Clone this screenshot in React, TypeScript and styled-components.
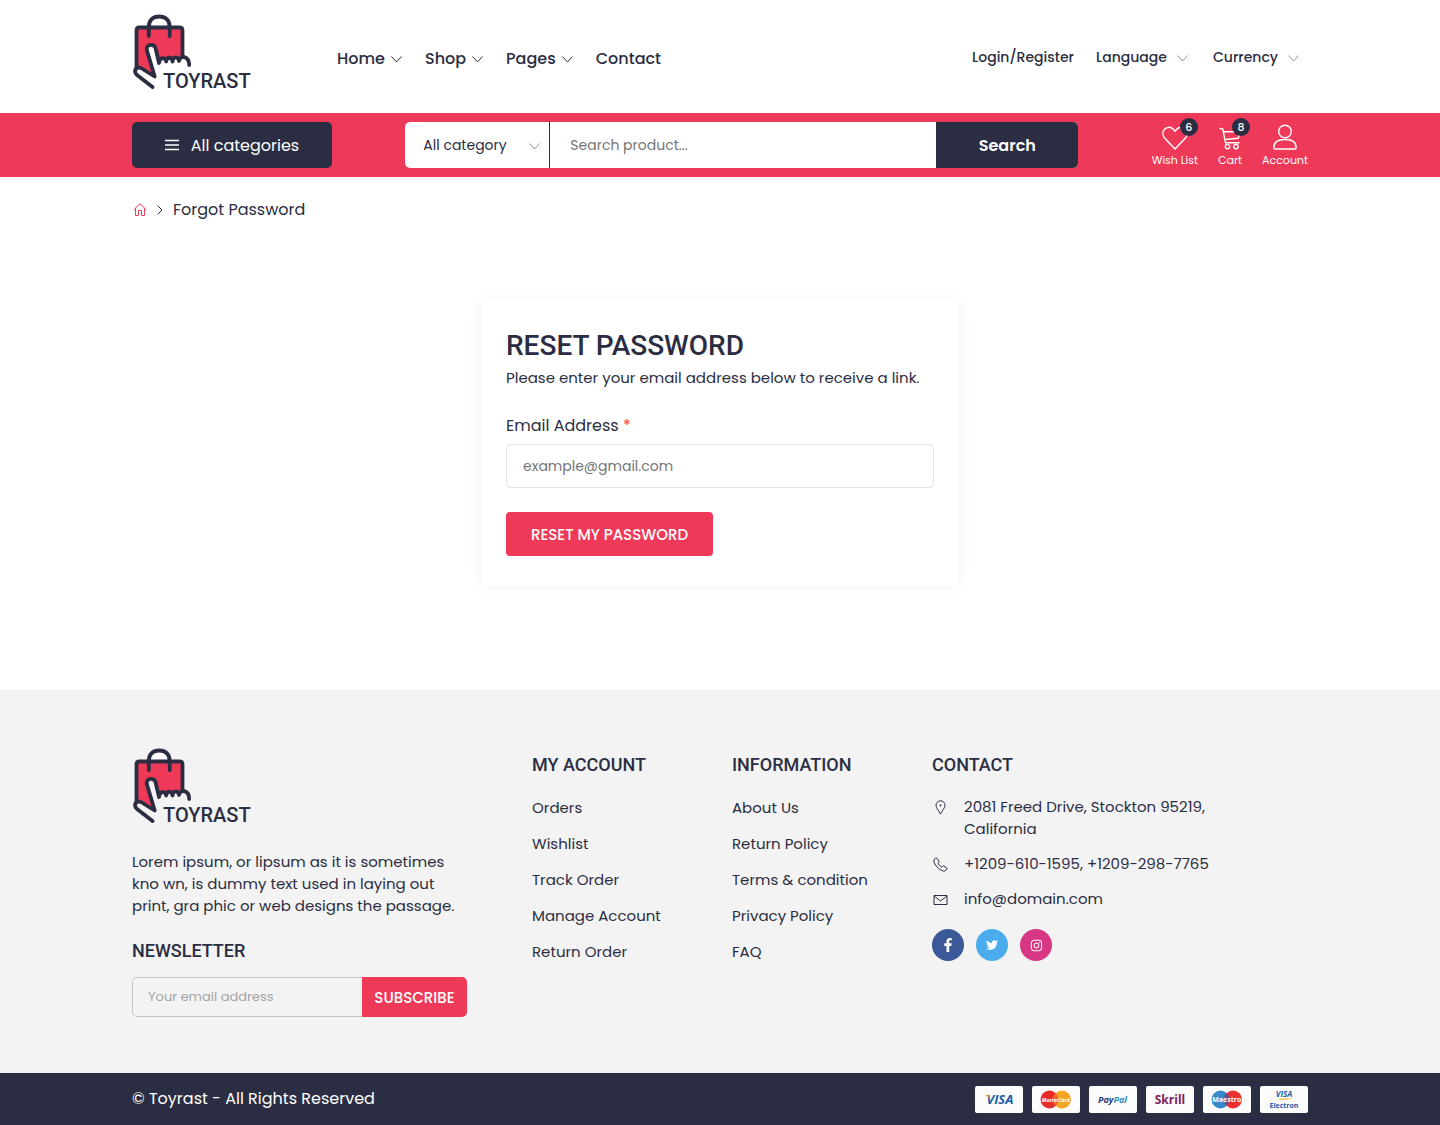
import React from "react";
import styled, { createGlobalStyle } from "styled-components";
import { FaFacebookF, FaTwitter, FaInstagram } from "react-icons/fa";

const pink = "#ee3a58";
const navy = "#2b2d42";
const body = `Poppins, Inter, "Noto Sans", sans-serif`;
const heading = `Roboto, "Liberation Sans", sans-serif`;

const GlobalStyle = createGlobalStyle`
  *, *::before, *::after { box-sizing: border-box; }
  body { margin: 0; background: #fff; color: ${navy}; font: 400 15px/22px ${body}; }
  h1, h2, p, ul { margin: 0; padding: 0; }
  ul { list-style: none; }
  a { color: inherit; text-decoration: none; }
  button, input, select { font-family: inherit; color: inherit; border: 0; margin: 0; }
  button { cursor: pointer; padding: 0; }
  svg { display: block; flex: none; }
`;

const Container = styled.div`
  width: 100%;
  max-width: 1200px;
  margin: 0 auto;
  padding: 0 12px;
`;

/* ---------- header ---------- */
const HeaderRow = styled(Container)`
  display: flex;
  align-items: center;
  padding-top: 14px;
  padding-bottom: 19px;
`;
const LogoLink = styled.a`
  display: block;
  width: 120px;
`;
const Nav = styled.nav`
  display: flex;
  gap: 23px;
  margin: 10px auto 0 85px;
  font-size: 16px;
  line-height: 24px;
  font-weight: 500;
`;
const NavLink = styled.a`
  display: flex;
  align-items: center;
  gap: 6px;
`;
const Tools = styled.div`
  display: flex;
  align-items: center;
  gap: 22px;
  margin-top: 6px;
  padding-right: 6px;
  font-size: 14px;
  font-weight: 500;
`;
const SelectWrap = styled.div`
  position: relative;
  display: flex;
  align-items: center;
  & > svg {
    position: absolute;
    right: 3px;
    margin-top: 2px;
    color: #8f909b;
    pointer-events: none;
  }
`;
const PlainSelect = styled.select`
  appearance: none;
  background: transparent;
  padding: 0 24px 0 0;
  font-size: 14px;
  line-height: 22px;
  font-weight: 500;
`;

/* ---------- search band ---------- */
const Band = styled.div`
  background: ${pink};
  padding: 9px 0;
`;
const BandRow = styled(Container)`
  display: flex;
  justify-content: space-between;
`;
const Categories = styled.button`
  display: flex;
  align-items: center;
  justify-content: center;
  gap: 12px;
  width: 200px;
  height: 46px;
  border-radius: 5px;
  background: ${navy};
  color: #fff;
  font-size: 16px;
  font-weight: 400;
`;
const SearchForm = styled.form`
  display: flex;
  flex: 0 1 673px;
  height: 46px;
  border-radius: 5px;
  overflow: hidden;
  background: #fff;
`;
const CategoryWrap = styled(SelectWrap)`
  flex: 0 0 145px;
  border-right: 1px solid ${navy};
  & > svg { right: 9px; }
`;
const CategorySelect = styled(PlainSelect)`
  width: 100%;
  height: 46px;
  padding: 0 24px 0 18px;
  font-weight: 400;
`;
const SearchInput = styled.input`
  flex: 1;
  min-width: 0;
  padding: 0 20px;
  font-size: 14px;
  background: #fff;
  outline: none;
  &::placeholder { color: #757575; opacity: 1; }
`;
const SearchButton = styled.button`
  flex: 0 0 142px;
  background: ${navy};
  color: #fff;
  font-size: 16px;
  font-weight: 600;
`;
const Shortcuts = styled.div`
  display: flex;
  align-items: flex-end;
  gap: 20px;
  color: #fff;
`;
const Shortcut = styled.a`
  display: flex;
  flex-direction: column;
  align-items: center;
  gap: 2px;
  font-size: 11px;
  line-height: 16px;
  font-weight: 400;
`;
const IconBox = styled.span`
  position: relative;
  display: block;
`;
const Badge = styled.span<{ $shift: number }>`
  position: absolute;
  top: -8px;
  right: -${(p) => p.$shift}px;
  width: 18px;
  height: 18px;
  border-radius: 50%;
  background: ${navy};
  text-align: center;
  font-size: 11px;
  line-height: 18px;
  font-weight: 500;
`;

/* ---------- main ---------- */
const Crumbs = styled(Container)`
  display: flex;
  align-items: center;
  padding-top: 21px;
  font-size: 16px;
  line-height: 24px;
  & > a { color: ${pink}; padding: 0 10px 0 1px; }
  & > span { padding-left: 10px; }
`;
const Card = styled.form`
  width: 100%;
  max-width: 476px;
  margin: 77px auto 104px;
  padding: 30px 24px;
  background: #fff;
  box-shadow: 0 0 15px rgba(0, 0, 0, 0.06);
`;
const Title = styled.h1`
  margin-bottom: 4px;
  font: 500 28px/34px ${heading};
`;
const Lead = styled.p`
  margin-bottom: 25px;
`;
const Label = styled.label`
  display: block;
  margin-bottom: 6px;
  font-size: 16px;
  line-height: 24px;
`;
const Required = styled.span`
  color: #f44336;
`;
const EmailInput = styled.input`
  display: block;
  width: 100%;
  height: 44px;
  margin-bottom: 24px;
  padding: 0 16px;
  border: 1px solid #e2e2e4;
  border-radius: 4px;
  font-size: 14px;
  outline: none;
  &::placeholder { color: #757575; opacity: 1; }
`;
const ResetButton = styled.button`
  display: block;
  width: 207px;
  height: 44px;
  border-radius: 4px;
  background: ${pink};
  color: #fff;
  font-size: 15px;
  font-weight: 500;
`;

/* ---------- footer ---------- */
const FooterArea = styled.footer`
  background: #f3f3f3;
`;
const FooterGrid = styled(Container)`
  display: grid;
  grid-template-columns: repeat(12, 1fr);
  column-gap: 24px;
  padding-top: 58px;
  padding-bottom: 56px;
`;
const Column = styled.section<{ $span: number; $flush?: boolean }>`
  grid-column: span ${(p) => p.$span};
  padding-top: ${(p) => (p.$flush ? 0 : 6)}px;
`;
const ColumnTitle = styled.h2`
  font: 500 18px/22px ${heading};
`;
const About = styled.p`
  max-width: 335px;
  margin: 23px 0;
`;
const Newsletter = styled.form`
  display: flex;
  max-width: 335px;
  height: 40px;
  margin-top: 15px;
`;
const NewsletterInput = styled.input`
  flex: 1;
  min-width: 0;
  padding: 0 15px;
  border: 1px solid #c4c4c6;
  border-right: 0;
  border-radius: 5px 0 0 5px;
  background: transparent;
  font-size: 13px;
  outline: none;
  &::placeholder { color: #a3a3a6; opacity: 1; }
`;
const SubscribeButton = styled.button`
  width: 105px;
  border-radius: 0 5px 5px 0;
  background: ${pink};
  color: #fff;
  font-size: 15px;
  font-weight: 500;
`;
const LinkList = styled.ul`
  display: grid;
  gap: 14px;
  margin-top: 21px;
`;
const ContactList = styled.ul`
  display: grid;
  gap: 13px;
  max-width: 290px;
  margin-top: 20px;
`;
const ContactItem = styled.li`
  display: grid;
  grid-template-columns: 17px 1fr;
  column-gap: 15px;
  & > svg { margin: 4px 0 0 1px; }
`;
const Socials = styled.div`
  display: flex;
  gap: 12px;
  margin-top: 19px;
`;
const Social = styled.a<{ $color: string }>`
  display: grid;
  place-items: center;
  width: 32px;
  height: 32px;
  border-radius: 50%;
  background: ${(p) => p.$color};
  color: #fff;
`;
const BottomBar = styled.div`
  background: ${navy};
  color: #fff;
`;
const BottomRow = styled(Container)`
  display: flex;
  align-items: center;
  justify-content: space-between;
  min-height: 52px;
  font-size: 16px;
`;
const Payments = styled.div`
  display: flex;
  gap: 9px;
`;

/* ---------- drawings ---------- */
const Logo = () => (
  <svg width="120" height="80" viewBox="0 0 120 80" role="img" aria-label="Toyrast">
    <path d="M17 14C17 6 21 2 27.200 2S37.500 6 37.500 14Z" fill="#fff" />
    <path
      d="M4.500 55V16.500Q4.500 13.500 7.500 13.500H47.500Q50.500 13.500 50.500 16.500V44L47 48L44 44L40.500 48L37 44L34 48L31 44L27 49L23.500 34C22 29.500 14.500 30 14.800 35L22.700 62L10 54Z"
      fill={pink}
    />
    <g fill="none" stroke={navy} strokeWidth="3.800" strokeLinecap="round" strokeLinejoin="round">
      <path d="M4.500 54V16.500Q4.500 13.500 7.500 13.500H47.500Q50.500 13.500 50.500 16.500V42" />
      <path d="M16.800 22V13C16.800 6 21 2.500 27.200 2.500S37.700 6 37.700 13V22" />
      <path d="M20.500 73L5 61C1 57 4 52 9 54L22.700 62.500L14.800 36C14 29.500 22 29.500 23.500 34L27 49C27.500 43 33 42.500 34.200 47.500C35 42.500 39.500 42.500 40.500 47.500C41 42 46 42 47 47C48 40.500 57 42 57.200 51" />
    </g>
    <text x="31" y="74" fill={navy} fontFamily={heading} fontSize="20" fontWeight="500">TOYRAST</text>
  </svg>
);
const Chevron = () => (
  <svg width="11" height="12" viewBox="0 0 11 12" fill="none" stroke="currentColor" aria-hidden="true">
    <path d="M.5 3.500L5.500 9L10.500 3.500" />
  </svg>
);
const MenuIcon = () => (
  <svg width="14" height="12" viewBox="0 0 14 12" stroke="#fff" strokeWidth="1.500" aria-hidden="true">
    <path d="M0 1.500H14M0 6H14M0 10.500H14" />
  </svg>
);
const HomeIcon = () => (
  <svg width="14" height="14" viewBox="0 0 14 14" fill="none" stroke="currentColor" aria-hidden="true">
    <path d="M.7 6.800L7 .7L13.300 6.800M2.500 5.500V12.500H5.500V7.500H8.500V12.500H11.500V5.500" />
  </svg>
);
const CrumbArrow = () => (
  <svg width="6" height="10" viewBox="0 0 6 10" fill="none" stroke={navy} aria-hidden="true">
    <path d="M.7 .7L5 5L.7 9.300" />
  </svg>
);
const HeartIcon = () => (
  <svg width="26" height="24" viewBox="0 0 26 24" fill="none" stroke="#fff" strokeWidth="1.400" strokeLinejoin="round" aria-hidden="true">
    <path d="M13 23L3 12.500C.5 9.800 .3 6 2.300 3.500C4.800 .5 9 .7 11.300 3.200L13 5.300L14.700 3.200C17 .7 21.200 .5 23.700 3.500C25.700 6 25.500 9.800 23 12.500Z" />
  </svg>
);
const CartIcon = () => (
  <svg width="24" height="24" viewBox="0 0 24 24" fill="none" stroke="#fff" strokeWidth="1.400" strokeLinejoin="round" strokeLinecap="round" aria-hidden="true">
    <path d="M2 2.500L4.800 3L7.500 16.700H21M5.300 5.700H22L20.300 12.200L6.800 13.500" />
    <circle cx="9.500" cy="20.600" r="2.200" />
    <circle cx="18" cy="20.600" r="2.200" />
  </svg>
);
const UserIcon = () => (
  <svg width="24" height="26" viewBox="0 0 24 26" fill="none" stroke="#fff" strokeWidth="1.400" strokeLinejoin="round" aria-hidden="true">
    <circle cx="12" cy="7.500" r="6.300" />
    <path d="M.8 23.500C.8 18 5.500 15.500 12 15.500S23.200 18 23.200 23.500Q23.200 25 21.700 25H2.300Q.8 25 .8 23.500Z" />
  </svg>
);
const PinIcon = () => (
  <svg width="15" height="15" viewBox="0 0 15 15" fill="none" stroke={navy} aria-hidden="true">
    <path d="M7.500 14C6 10.800 3 8.300 3 5.300A4.500 4.500 0 0 1 12 5.300C12 8.300 9 10.800 7.500 14Z" />
    <circle cx="7.500" cy="5.300" r=".6" />
  </svg>
);
const PhoneIcon = () => (
  <svg width="15" height="15" viewBox="0 0 15 15" fill="none" stroke={navy} strokeLinejoin="round" aria-hidden="true">
    <path d="M3.800 1.200L6 4.300Q6.300 5 5.700 5.500L4.900 6.200Q6.300 8.800 8.800 10.200L9.600 9.200Q10.200 8.600 10.900 9L13.700 10.900Q14.300 11.400 13.900 12C12.700 14.300 10.800 14.600 8.600 13.400C5.300 11.700 2.600 8.900 1.200 5.700C.4 3.700 1 2 2.700 1Q3.400 .7 3.800 1.200Z" />
  </svg>
);
const MailIcon = () => (
  <svg width="15" height="15" viewBox="0 0 15 15" fill="none" stroke={navy} aria-hidden="true">
    <path d="M1 3.500H14V12.500H1ZM1 4L7.500 9L14 4" />
  </svg>
);

const PayCard = ({ label, children }: { label: string; children: React.ReactNode }) => (
  <svg width="48" height="27" viewBox="0 0 48 27" role="img" aria-label={label} fontFamily={`"Open Sans", sans-serif`} fontWeight="700" textAnchor="middle">
    <rect width="48" height="27" rx="2" fill="#fcfcfd" />
    {children}
  </svg>
);

const PaymentCards = () => (
  <Payments>
    <PayCard label="Visa">
      <text x="25" y="18" fontSize="13" fontStyle="italic" fill="#1a5fa9">VISA</text>
      <path d="M9.500 9H13.500L14.500 13Q13 10 9.500 9Z" fill="#f4a52a" />
    </PayCard>
    <PayCard label="MasterCard">
      <circle cx="17.500" cy="13.500" r="9" fill="#e82c2a" />
      <circle cx="30" cy="13.500" r="9" fill="#f6a623" />
      <path d="M23.750 7A9 9 0 0 1 23.750 20A9 9 0 0 1 23.750 7Z" fill="#ee6b26" />
      <text x="23.750" y="15.500" fontSize="5" fontStyle="italic" fill="#fff">MasterCard</text>
    </PayCard>
    <PayCard label="PayPal">
      <text x="23.500" y="17" fontSize="9" fontStyle="italic" fill="#253b80">Pay<tspan fill="#2790c3">Pal</tspan></text>
    </PayCard>
    <PayCard label="Skrill">
      <text x="24" y="18" fontSize="12" fill="#811c62">Skrill</text>
    </PayCard>
    <PayCard label="Maestro">
      <circle cx="17.500" cy="13.500" r="9" fill="#3489ca" />
      <circle cx="30" cy="13.500" r="9" fill="#ed2f2f" />
      <path d="M23.750 7A9 9 0 0 1 23.750 20A9 9 0 0 1 23.750 7Z" fill="#754b86" />
      <text x="23.750" y="16" fontSize="7" fill="#fff">Maestro</text>
    </PayCard>
    <PayCard label="Visa Electron">
      <text x="24" y="11" fontSize="8" fontStyle="italic" fill="#1a5fa9">VISA</text>
      <path d="M17 14.500Q24 11 33 13Q24 13 17 14.500Z" fill="#f4a52a" />
      <text x="24" y="22" fontSize="7" fill="#1a5fa9">Electron</text>
    </PayCard>
  </Payments>
);

const navItems = [
  { name: "Home", menu: true },
  { name: "Shop", menu: true },
  { name: "Pages", menu: true },
  { name: "Contact", menu: false },
];
const linkColumns = [
  { title: "MY ACCOUNT", links: ["Orders", "Wishlist", "Track Order", "Manage Account", "Return Order"] },
  { title: "INFORMATION", links: ["About Us", "Return Policy", "Terms & condition", "Privacy Policy", "FAQ"] },
];
const stop = (e: React.FormEvent) => e.preventDefault();

export default function App() {
  return (
    <>
      <GlobalStyle />
      <header>
        <HeaderRow>
          <LogoLink href="#"><Logo /></LogoLink>
          <Nav>
            {navItems.map((item) => (
              <NavLink href="#" key={item.name}>
                {item.name}
                {item.menu && <Chevron />}
              </NavLink>
            ))}
          </Nav>
          <Tools>
            <a href="#">Login/Register</a>
            <SelectWrap>
              <PlainSelect aria-label="Language"><option>Language</option></PlainSelect>
              <Chevron />
            </SelectWrap>
            <SelectWrap>
              <PlainSelect aria-label="Currency"><option>Currency</option></PlainSelect>
              <Chevron />
            </SelectWrap>
          </Tools>
        </HeaderRow>
        <Band>
          <BandRow>
            <Categories type="button"><MenuIcon />All categories</Categories>
            <SearchForm onSubmit={stop}>
              <CategoryWrap>
                <CategorySelect aria-label="Category"><option>All category</option></CategorySelect>
                <Chevron />
              </CategoryWrap>
              <SearchInput type="search" aria-label="Search product" placeholder="Search product..." />
              <SearchButton type="submit">Search</SearchButton>
            </SearchForm>
            <Shortcuts>
              <Shortcut href="#">
                <IconBox><HeartIcon /><Badge $shift={10}>6</Badge></IconBox>
                Wish List
              </Shortcut>
              <Shortcut href="#">
                <IconBox><CartIcon /><Badge $shift={8}>8</Badge></IconBox>
                Cart
              </Shortcut>
              <Shortcut href="#">
                <IconBox><UserIcon /></IconBox>
                Account
              </Shortcut>
            </Shortcuts>
          </BandRow>
        </Band>
      </header>

      <main>
        <Crumbs as="nav" aria-label="Breadcrumb">
          <a href="#" aria-label="Home page"><HomeIcon /></a>
          <CrumbArrow />
          <span>Forgot Password</span>
        </Crumbs>
        <Card onSubmit={stop}>
          <Title>RESET PASSWORD</Title>
          <Lead>Please enter your email address below to receive a link.</Lead>
          <Label htmlFor="email">Email Address <Required>*</Required></Label>
          <EmailInput id="email" type="email" placeholder="example@gmail.com" />
          <ResetButton type="submit">RESET MY PASSWORD</ResetButton>
        </Card>
      </main>

      <FooterArea>
        <FooterGrid>
          <Column $span={4} $flush>
            <LogoLink href="#"><Logo /></LogoLink>
            <About>
              Lorem ipsum, or lipsum as it is sometimes kno wn, is dummy text used in laying out print, gra phic or
              web designs the passage.
            </About>
            <ColumnTitle>NEWSLETTER</ColumnTitle>
            <Newsletter onSubmit={stop}>
              <NewsletterInput type="email" aria-label="Your email address" placeholder="Your email address" />
              <SubscribeButton type="submit">SUBSCRIBE</SubscribeButton>
            </Newsletter>
          </Column>
          {linkColumns.map((col) => (
            <Column $span={2} key={col.title}>
              <ColumnTitle>{col.title}</ColumnTitle>
              <LinkList>
                {col.links.map((link) => (
                  <li key={link}><a href="#">{link}</a></li>
                ))}
              </LinkList>
            </Column>
          ))}
          <Column $span={4}>
            <ColumnTitle>CONTACT</ColumnTitle>
            <ContactList>
              <ContactItem><PinIcon /><span>2081 Freed Drive, Stockton 95219, California</span></ContactItem>
              <ContactItem><PhoneIcon /><span>+1209-610-1595, +1209-298-7765</span></ContactItem>
              <ContactItem><MailIcon /><a href="#">info@domain.com</a></ContactItem>
            </ContactList>
            <Socials>
              <Social href="#" $color="#3b5998" aria-label="Facebook"><FaFacebookF size={14} /></Social>
              <Social href="#" $color="#4aabed" aria-label="Twitter"><FaTwitter size={12} /></Social>
              <Social href="#" $color="#d83783" aria-label="Instagram"><FaInstagram size={13} /></Social>
            </Socials>
          </Column>
        </FooterGrid>
        <BottomBar>
          <BottomRow>
            <span>© Toyrast - All Rights Reserved</span>
            <PaymentCards />
          </BottomRow>
        </BottomBar>
      </FooterArea>
    </>
  );
}
